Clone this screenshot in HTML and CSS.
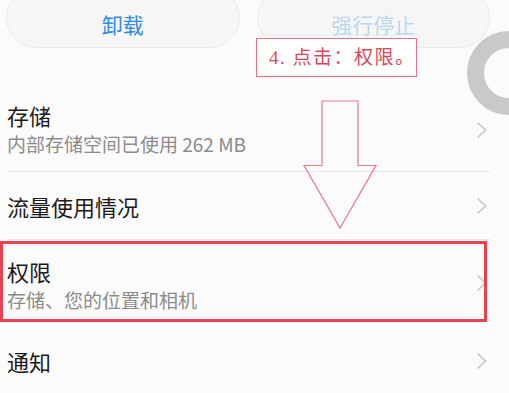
FILE: index.html
```html
<!DOCTYPE html>
<html lang="zh-CN">
<head>
<meta charset="utf-8">
<title>应用信息</title>
<link rel="stylesheet" href="styles.css">
</head>
<body>
<div class="page">
  <div class="actions">
    <button class="btn btn-primary">卸载</button>
    <button class="btn btn-disabled">强行停止</button>
  </div>

  <ul class="list">
    <li class="row row-two">
      <div class="texts">
        <div class="title">存储</div>
        <div class="sub">内部存储空间已使用 262 MB</div>
      </div>
      <svg class="chev" width="11" height="18" viewBox="0 0 11 18"><polyline points="1.5,1.5 9.5,9 1.5,16.5"/></svg>
    </li>
    <li class="row row-one">
      <div class="texts">
        <div class="title">流量使用情况</div>
      </div>
      <svg class="chev" width="11" height="18" viewBox="0 0 11 18"><polyline points="1.5,1.5 9.5,9 1.5,16.5"/></svg>
    </li>
    <li class="row row-two row-perm">
      <div class="texts">
        <div class="title">权限</div>
        <div class="sub">存储、您的位置和相机</div>
      </div>
      <svg class="chev" width="11" height="18" viewBox="0 0 11 18"><polyline points="1.5,1.5 9.5,9 1.5,16.5"/></svg>
    </li>
    <li class="row row-one row-last">
      <div class="texts">
        <div class="title">通知</div>
      </div>
      <svg class="chev" width="11" height="18" viewBox="0 0 11 18"><polyline points="1.5,1.5 9.5,9 1.5,16.5"/></svg>
    </li>
  </ul>

  <div class="spinner"></div>
  <div class="note">4. 点击：权限。</div>
  <svg class="arrow" width="76" height="131" viewBox="0 0 76 131"><polygon points="19,1 55,1 55,65.5 73,65.5 37,128 1,65.5 19,65.5"/></svg>
  <div class="highlight"></div>
</div>
</body>
</html>
```

FILE: styles.css
```css
html, body {
  margin: 0;
  padding: 0;
  overflow: hidden;
  background: #fbfbfb;
}

.page {
  position: relative;
  width: 509px;
  height: 393px;
  overflow: hidden;
  font-family: "Noto Sans CJK SC", "Noto Sans", sans-serif;
}

.actions {
  display: flex;
  gap: 17px;
  margin-top: -12px;
  padding: 0 19px 0 6px;
}

.btn {
  flex: 1;
  height: 60px;
  border-radius: 30px;
  border: 1px solid #ebebeb;
  background: #f6f6f6;
  font-family: "Noto Sans CJK SC", sans-serif;
  font-size: 21px;
  line-height: 24px;
  padding: 12px 0 0 0;
  box-sizing: border-box;
}

.btn-primary {
  color: #2f8ae6;
}

.btn-disabled {
  color: #bcd6f2;
}

.list {
  list-style: none;
  margin: 40px 0 0 0;
  padding: 0;
}

.row {
  display: flex;
  align-items: center;
  justify-content: space-between;
  margin: 0 19px 0 7px;
  padding-right: 3px;
  border-bottom: 1px solid #e7e7e7;
}

.row-two {
  height: 83px;
}

.row-one {
  height: 67px;
}

.row-perm {
  height: 86px;
  border-bottom-color: transparent;
}

.row-last {
  height: 68px;
  border-bottom: none;
}

.title {
  font-size: 22px;
  line-height: 28px;
  color: #1a1a1a;
}

.sub {
  font-size: 19px;
  line-height: 29px;
  color: #8b8b8b;
}

.row-perm .texts {
  padding-top: 4px;
}

.chev polyline {
  fill: none;
  stroke: #c6c6c6;
  stroke-width: 1.5;
}

.spinner {
  position: absolute;
  left: 467px;
  top: 31px;
  width: 84px;
  height: 84px;
  box-sizing: border-box;
  border: 17px solid #c9c9c9;
  border-radius: 50%;
}

.note {
  position: absolute;
  left: 256px;
  top: 38px;
  width: 161px;
  height: 39px;
  box-sizing: border-box;
  border: 1px solid #e27485;
  background: #ffffff;
  color: #d9475c;
  font-family: "Liberation Serif", "Noto Sans CJK SC", serif;
  font-size: 19px;
  letter-spacing: 1.5px;
  line-height: 37px;
  padding-left: 12px;
  white-space: nowrap;
}

.arrow {
  position: absolute;
  left: 303px;
  top: 100px;
}

.arrow polygon {
  fill: none;
  stroke: #e67a8a;
  stroke-width: 1.2;
}

.highlight {
  position: absolute;
  left: 0;
  top: 241px;
  width: 487px;
  height: 81px;
  box-sizing: border-box;
  border: 3px solid #e8414f;
}
```
